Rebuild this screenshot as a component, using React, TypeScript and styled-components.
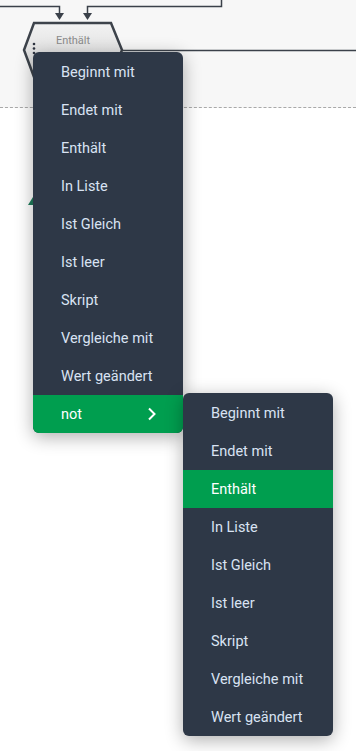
import React from 'react';
import styled, { createGlobalStyle } from 'styled-components';

const GlobalStyle = createGlobalStyle`
  html, body {
    margin: 0;
    padding: 0;
    background: #ffffff;
    font-family: Roboto, "Liberation Sans", Arial, sans-serif;
  }
`;

const OPERATORS = [
  'Beginnt mit',
  'Endet mit',
  'Enthält',
  'In Liste',
  'Ist Gleich',
  'Ist leer',
  'Skript',
  'Vergleiche mit',
  'Wert geändert',
];

const Page = styled.div`
  position: relative;
  width: 356px;
  height: 751px;
  overflow: hidden;
  background: #ffffff;
`;

const Canvas = styled.div`
  position: relative;
  height: 107px;
  background: #f7f7f7;
  border-bottom: 1px dashed #a9a9a9;
`;

const Wires = styled.svg`
  position: absolute;
  left: 0;
  top: 0;
`;

const NodeLabel = styled.div`
  position: absolute;
  left: 33px;
  top: 34px;
  width: 80px;
  display: flex;
  flex-direction: column;
  align-items: center;
  gap: 4px;
  font-size: 11px;
  line-height: 13px;
  color: #8b8b8b;
`;

const NodeSub = styled.span`
  color: #555b63;
  font-weight: 500;
`;

const Marker = styled.div`
  position: absolute;
  left: 28px;
  top: 197px;
  width: 0;
  height: 0;
  border-left: 5px solid transparent;
  border-right: 5px solid transparent;
  border-bottom: 8px solid #1f7d5c;
`;

const Menu = styled.ul<{ $x: number; $y: number }>`
  position: absolute;
  left: ${(p) => p.$x}px;
  top: ${(p) => p.$y}px;
  width: 150px;
  margin: 0;
  padding: 1px 0 0;
  list-style: none;
  background: #2e3847;
  border-radius: 6px;
  overflow: hidden;
  box-shadow: 0 4px 18px rgba(0, 0, 0, 0.32);
  z-index: 2;
`;

const Item = styled.li<{ $active?: boolean }>`
  display: flex;
  align-items: center;
  justify-content: space-between;
  height: 38px;
  padding: 0 26px 0 28px;
  font-size: 14.5px;
  color: ${(p) => (p.$active ? '#ffffff' : '#d9e3f3')};
  background: ${(p) => (p.$active ? '#009e4f' : 'transparent')};
  white-space: nowrap;
`;

const Chevron = () => (
  <svg width="10" height="14" viewBox="0 0 10 14">
    <path d="M2 1.5 L7.5 7 L2 12.5" fill="none" stroke="#ffffff" strokeWidth="2" />
  </svg>
);

export default function App() {
  return (
    <Page>
      <GlobalStyle />
      <Canvas>
        <Wires width="356" height="107" viewBox="0 0 356 107">
          <defs>
            <linearGradient id="hexFill" x1="0" y1="0" x2="0" y2="1">
              <stop offset="0" stopColor="#f2f2f2" />
              <stop offset="1" stopColor="#d6d6d6" />
            </linearGradient>
          </defs>
          <path d="M0 6.5 H59.5 V13" fill="none" stroke="#3b414a" strokeWidth="1.5" />
          <path d="M221.5 0 V6.5 H87.5 V13" fill="none" stroke="#3b414a" strokeWidth="1.5" />
          <path d="M55 13 L64 13 L59.5 20 Z" fill="#3b414a" />
          <path d="M83 13 L92 13 L87.5 20 Z" fill="#3b414a" />
          <path d="M122 50.5 H356" fill="none" stroke="#3b414a" strokeWidth="1.5" />
          <path
            d="M34 23 H111 L122 50 L111 77 H34 L24 50 Z"
            fill="url(#hexFill)"
            stroke="#3d434b"
            strokeWidth="2.5"
            strokeLinejoin="miter"
          />
          <circle cx="34" cy="44" r="1.3" fill="#2e3440" />
          <circle cx="34" cy="48.5" r="1.3" fill="#2e3440" />
          <circle cx="34" cy="53" r="1.3" fill="#2e3440" />
        </Wires>
        <NodeLabel>
          <span>Enthält</span>
          <NodeSub>Enthält</NodeSub>
        </NodeLabel>
      </Canvas>

      <Marker />

      <Menu $x={33} $y={52}>
        {OPERATORS.map((op) => (
          <Item key={op}>{op}</Item>
        ))}
        <Item $active>
          not
          <Chevron />
        </Item>
      </Menu>

      <Menu $x={183} $y={393}>
        {OPERATORS.map((op) => (
          <Item key={op} $active={op === 'Enthält'}>
            {op}
          </Item>
        ))}
      </Menu>
    </Page>
  );
}
